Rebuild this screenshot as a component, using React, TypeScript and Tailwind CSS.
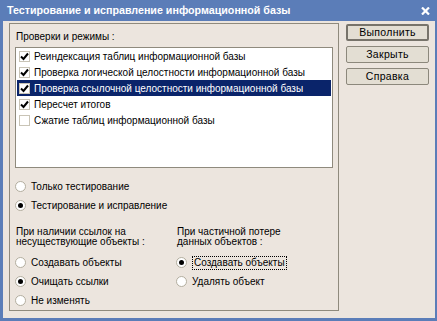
import type { ReactNode } from 'react'

const font = { fontFamily: '"Liberation Sans", Arial, sans-serif' }

const checks = [
  { label: 'Реиндексация таблиц информационной базы', on: true },
  { label: 'Проверка логической целостности информационной базы', on: true },
  { label: 'Проверка ссылочной целостности информационной базы', on: true, selected: true },
  { label: 'Пересчет итогов', on: true },
  { label: 'Сжатие таблиц информационной базы', on: false },
]

function CheckBox({ on }: { on: boolean }) {
  return (
    <span className="flex h-[11px] w-[11px] shrink-0 items-center justify-center border border-[#c9c4b6] bg-white">
      {on && (
        <svg width="9" height="9" viewBox="0 0 9 9">
          <path d="M1 4.5 L3.5 7 L8 1.5" fill="none" stroke="#000" strokeWidth="2" />
        </svg>
      )}
    </span>
  )
}

function Radio({ on, children, focus }: { on?: boolean; children: ReactNode; focus?: boolean }) {
  return (
    <div className="flex h-[19px] items-center gap-[5px]">
      <span className="flex h-[11px] w-[11px] shrink-0 items-center justify-center rounded-full border border-[#b3ae9f] bg-white">
        {on && <span className="h-[5px] w-[5px] rounded-full bg-black" />}
      </span>
      <span className={focus ? 'border border-dotted border-black px-px leading-[12px]' : ''}>{children}</span>
    </div>
  )
}

function Btn({ children, primary }: { children: ReactNode; primary?: boolean }) {
  return (
    <button
      className={
        'h-[17px] w-[83px] rounded-[2px] bg-[#e3ded3] text-[10.5px] leading-none tracking-[0.3px] text-black ' +
        (primary ? 'border-2 border-[#77736a]' : 'border border-[#8c887c]')
      }
    >
      {children}
    </button>
  )
}

export default function App() {
  return (
    <div className="flex h-[321px] w-[437px] flex-col bg-[#5b7db8] text-[10px] text-black" style={font}>
      {/* title */}
      <div className="flex h-[21px] shrink-0 items-center justify-between pl-[7px] pr-[7px]">
        <span className="text-[10.7px] font-bold text-white">Тестирование и исправление информационной базы</span>
        <svg width="9" height="8" viewBox="0 0 9 8">
          <path d="M1 0.5 L8 7.5 M8 0.5 L1 7.5" stroke="#fff" strokeWidth="2.2" />
        </svg>
      </div>

      {/* body */}
      <div className="mb-[3px] ml-[3px] mr-[2px] flex flex-1 gap-[7px] bg-[#ece5de] pl-[6px] pt-[2px]">
        <div className="flex h-[288px] w-[330px] flex-col overflow-hidden border border-[#8f8a7d] px-[5px] pt-[7px]">
          <div className="ml-px leading-[12px]">Проверки и режимы :</div>

          <div className="mt-[4px] h-[121px] w-[318px] shrink-0 border border-[#8f8a7d] bg-white px-px">
            {checks.map((c) => (
              <div
                key={c.label}
                className={
                  'flex h-[16px] items-center gap-[4px] pl-[2px] ' + (c.selected ? 'bg-[#0a246a] text-white' : '')
                }
              >
                <CheckBox on={c.on} />
                <span className="whitespace-nowrap">{c.label}</span>
              </div>
            ))}
          </div>

          <div className="mt-[9px]">
            <Radio>Только тестирование</Radio>
            <Radio on>Тестирование и исправление</Radio>
          </div>

          <div className="mt-[12px] flex">
            <div className="w-[161px]">
              <div className="ml-px leading-[10px]">
                При наличии ссылок на
                <br />
                несуществующие объекты :
              </div>
              <div className="mt-[6px]">
                <Radio>Создавать объекты</Radio>
                <Radio on>Очищать ссылки</Radio>
                <Radio>Не изменять</Radio>
              </div>
            </div>
            <div>
              <div className="ml-px leading-[10px]">
                При частичной потере
                <br />
                данных объектов :
              </div>
              <div className="mt-[6px]">
                <Radio on focus>
                  Создавать объекты
                </Radio>
                <Radio>Удалять объект</Radio>
              </div>
            </div>
          </div>
        </div>

        <div className="flex flex-col gap-[5px] pt-[1px]">
          <Btn primary>Выполнить</Btn>
          <Btn>Закрыть</Btn>
          <Btn>Справка</Btn>
        </div>
      </div>
    </div>
  )
}
